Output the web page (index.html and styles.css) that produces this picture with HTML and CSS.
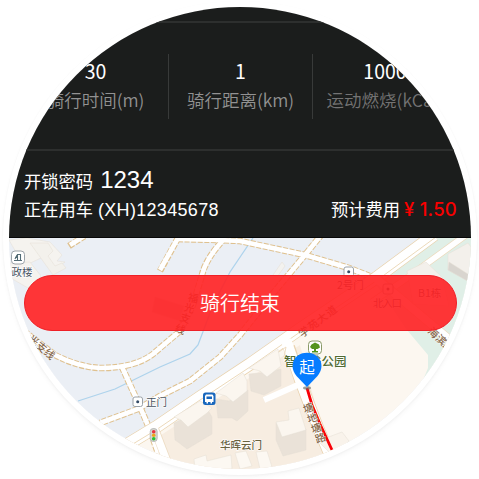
FILE: index.html
```html
<!DOCTYPE html>
<html lang="zh-CN">
<head>
<meta charset="utf-8">
<title>骑行</title>
<link rel="stylesheet" href="styles.css">
</head>
<body>
<main class="lens">
  <section class="panel">
    <div class="stats">
      <div class="stat"><span class="value">30</span><span class="label">骑行时间(m)</span></div>
      <div class="stat"><span class="value">1</span><span class="label">骑行距离(km)</span></div>
      <div class="stat"><span class="value">1000</span><span class="label dim">运动燃烧(kCal)</span></div>
    </div>
    <div class="ride">
      <div class="row code-row"><span>开锁密码</span><span class="code">1234</span></div>
      <div class="row bike-row"><span>正在用车 <span class="number">(XH)12345678</span></span><span class="fee">预计费用<b>¥ 1.50</b></span></div>
    </div>
  </section>
  <section class="map">
    <svg class="canvas" viewBox="9 238 462 231" width="462" height="231">
      <rect x="9" y="238" width="462" height="231" fill="#ebeff5"/>
      <!-- ground -->
      <path d="M120 450L160 426 215 388 255 360 300 329 372 282 440 238H471V469H120Z" fill="#fcf7f0"/>
      <path d="M158 437L300 345 322 430 335 469H176Z" fill="#f7ede1"/>
      <path d="M376 284L436 238H471V340L421 385 428 368V355L407 330Z" fill="#e0efe7"/>
      <!-- river -->
      <path d="M253 238L230 272 213 305 198 345 190 354 160 367 115 389 78 401" fill="none" stroke="#aed3ec" stroke-width="1.3"/>
      <!-- lanes -->
      <g fill="none" stroke="#dfc18f" stroke-width="6.6" stroke-dasharray="5 1.6">
        <path d="M69 246L86 235"/>
        <path d="M178 238L160 271"/>
        <path d="M178 239L218 240 240 241 305 255 349 268 372 277"/>
        <path d="M225 238Q206 258 202 275L193 305 180 331 153 354Q135 368 100 368Q78 367 55 355L25 332"/>
        <path d="M322 234L305 255 275 291 240 335 220 357 190 381 160 396 138 409 100 423"/>
        <path d="M122 367L137 400 150 430 158 453"/>
      </g>
      <g fill="none" stroke="#fff" stroke-width="4.6">
        <path d="M70 245L86 235"/>
        <path d="M178 238L160 270"/>
        <path d="M178 239L218 240 240 241 305 255 349 268 372 277"/>
        <path d="M225 238Q206 258 202 275L193 305 180 331 153 354Q135 368 100 368Q78 367 55 355L25 332"/>
        <path d="M322 234L305 255 275 291 240 335 220 357 190 381 160 396 138 409 100 423"/>
        <path d="M122 367L137 400 150 430 158 453"/>
      </g>
      <!-- avenue -->
      <g fill="none">
        <path d="M118 450L156 427 200 397 250 364 300 329 376 278 434 235" stroke="#e9d2ad" stroke-width="13"/>
        <path d="M118 450L156 427 200 397 250 364 300 329 376 278 434 235" stroke="#fff" stroke-width="11.6"/>
        <path d="M118 453L156 430 200 400 250 367 300 332 376 281 436 237" stroke="#ecd9ba" stroke-width="1"/>
        <path d="M372 302L400 283 466 235" stroke="#edd9bb" stroke-width="7"/>
        <path d="M372 302L400 283 466 235" stroke="#fff" stroke-width="5.6"/>
        <path d="M378 279L400 298 450 340" stroke="#eddcc3" stroke-width="9"/>
        <path d="M374 277L400 298 450 340" stroke="#fff" stroke-width="7.6"/>
        <path d="M289 347L300 380 317 425 337 472" stroke="#ead3b0" stroke-width="12"/>
        <path d="M286 340L300 380 317 425 337 472" stroke="#fff" stroke-width="10.4"/>
        <path d="M264 400L300 384" stroke="#fff" stroke-width="6"/>
        <path d="M266 361L286 347 284 357" stroke="#eddcc3" stroke-width="1"/>
        <path d="M155 430L171 472" stroke="#eddcc3" stroke-width="9"/>
        <path d="M154 428L171 472" stroke="#fff" stroke-width="7.6"/>
      </g>
      <!-- buildings -->
      <g stroke="#e5ded4" stroke-width=".5">
        <path d="M9 240L27 238 50 242 62 255 57 261 65 262 55 269 41 258 24 266Z" fill="#f5f3ef"/>
        <path d="M30 243L48 243 53 251 48 256 55 266 62 263 66 268 53 275Z" fill="#f3f1ec"/>
        <path d="M10 263L30 262 41 276 28 288 9 277Z" fill="#f5f3ef"/>
        <path d="M273 275L282 262 285 266 277 277Z" fill="#f3f2ef"/>
        <path d="M155 297L184 306 180 321 152 312Z" fill="#d9d5d0"/>
        <path d="M174 423L206 407 212 417V434L187 449 178 442 175 440Z" fill="#eae2d8"/>
        <path d="M174 417L200 401 212 408 207 413 188 427 181 420Z" fill="#fbf6ef"/>
        <path d="M216 399L229 401 248 390V411L237 421 232 418 218 418Z" fill="#eae2d8"/>
        <path d="M216 393L243 373 247 381V391L233 402 226 396Z" fill="#fbf6ef"/>
        <path d="M249 374L270 372 281 369V386L264 395 251 391Z" fill="#eae2d8"/>
        <path d="M249 368L278 349 281 366 267 377 260 371Z" fill="#fbf6ef"/>
        <path d="M276 423L306 429V450L283 456 276 440Z" fill="#eae2d8"/>
        <path d="M276 422L289 420 288 411 299 408 306 430 282 437Z" fill="#fbf6ef"/>
        <path d="M194 459L206 455 207 461 231 455 232 469H195ZM235 453L246 451 252 466 240 469ZM256 452L267 451 272 467 260 469Z" fill="#fcf8f2"/>
        <path d="M448 254L468 243 471 247V282L448 270Z" fill="#f3f0eb"/>
        <path d="M449 262L471 276V283L448 270Z" fill="#d9d5cf"/>
        <path d="M407 271L426 262 442 277 449 306 413 304Z" fill="#f3f0eb"/>
        <path d="M318 441L342 432 349 441 341 449 330 453Z" fill="#f9f3eb"/>
      </g>
      <!-- ride track -->
      <path d="M307 388L312 405 320 424 332 450" fill="none" stroke="#f80008" stroke-width="2.8"/>
      <!-- street names -->
      <g class="street">
        <text transform="translate(27 340) rotate(40)">光支线</text>
        <text x="188" y="302" transform="rotate(12 193 298)">福</text>
        <text x="184" y="312" transform="rotate(15 189 308)">光</text>
        <text x="180" y="322" transform="rotate(18 185 318)">支</text>
        <text x="175" y="333" transform="rotate(20 180 329)">线</text>
        <text transform="translate(302 338) rotate(-37)" letter-spacing="1">学苑大道</text>
        <text transform="translate(427 332) rotate(43)">海滨路</text>
        <text x="303" y="412" transform="rotate(-18 308 408)">塘</text>
        <text x="307" y="422" transform="rotate(-18 312 418)">地</text>
        <text x="311" y="432" transform="rotate(-18 316 428)">塘</text>
        <text x="315" y="442" transform="rotate(-18 320 438)">路</text>
      </g>
      <!-- places -->
      <g class="place">
        <text x="1" y="276">行政楼</text><text x="146" y="406">正门</text><text x="337" y="289">2号门</text>
        <text x="373" y="307" textLength="29">北入口</text><text x="418" y="297">B1栋</text>
        <text x="220" y="449" class="olive">华晖云门</text><text x="284" y="366" class="green">智慧谷公园</text>
      </g>
      <g fill="#fff" stroke="#9ba2a8" stroke-width="1">
        <rect x="11.5" y="251" width="13" height="13" rx="3.5"/>
        <rect x="133" y="397" width="9.5" height="9.5" rx="2"/>
        <rect x="344" y="267" width="9.5" height="9.5" rx="2"/>
        <rect x="383" y="284" width="10" height="10" rx="2"/>
        <rect x="308.5" y="341" width="13" height="13" rx="3.5" stroke="#8a9a68"/>
      </g>
      <g fill="#334b66"><circle cx="137.7" cy="401.7" r="1.5"/><circle cx="348.7" cy="271.7" r="1.5"/><circle cx="388" cy="289" r="1.5"/></g>
      <path d="M14 260.5H22M15 259L17 255M17.5 260V254.5H20.5V260M15 257.5H17.5" fill="none" stroke="#526b75" stroke-width="1.1"/>
      <path d="M315 342.5L319 344.5 320 347.5 317.5 349H316V351H318V352.5H312V351H314V349H312L310 347 311.5 344.5Z" fill="#54941e"/>
      <rect x="203" y="392.5" width="12.5" height="12.5" rx="2.5" fill="#1867bd"/>
      <path d="M206 394.5H212.5L213.5 396V402H212V403.5H210.5V402H208V403.5H206.5V402H205V396Z" fill="#fff"/>
      <path d="M206.5 396.5H212V399H206.5Z" fill="#1867bd"/>
      <rect x="150.2" y="428.5" width="7" height="13" rx="3" fill="#d5d6d0" stroke="#aaa" stroke-width=".7"/>
      <circle cx="153.7" cy="431.7" r="1.8" fill="#e93443"/><circle cx="153.7" cy="435.2" r="1.8" fill="#eda51f"/><circle cx="153.7" cy="438.7" r="1.8" fill="#2cc235"/>
      <!-- start pin -->
      <ellipse cx="307" cy="388" rx="4" ry="1.7" fill="#69716c" opacity=".65"/>
      <path d="M307 387L296.5 376C288 366 294 352.8 307 352.8S326 366 317.5 376Z" fill="#077cff"/>
      <text x="307" y="372.5" class="pin">起</text>
    </svg>
    <button class="finish" type="button">骑行结束</button>
  </section>
</main>
</body>
</html>
```
FILE: styles.css
```css
* { box-sizing: border-box; }
body {
  margin: 0;
  height: 479px;
  padding: 7px 0 0 9px;
  overflow: hidden;
  background: #fff;
  font-family: "Liberation Sans", "Noto Sans CJK SC", sans-serif;
}
.lens {
  width: 462px;
  height: 462px;
  border-radius: 50%;
  overflow: hidden;
  box-shadow: 0 0 0 6px #fff, 0 1px 2px 6px #f1f1f1, 0 3px 5px 6px #f8f8f8;
}
.panel {
  height: 231px;
  padding-top: 14px;
  background: #1b1d1c;
  border-bottom: 1px solid #080808;
  color: #fff;
}
.stats {
  display: grid;
  grid-template-columns: repeat(3, 144.5px);
  align-items: center;
  justify-content: center;
  height: 130px;
  border-top: 2px solid #2d2f2e;
  border-bottom: 2px solid #2d2f2e;
}
.stat {
  display: flex;
  flex-direction: column;
  align-items: center;
  height: 65px;
  padding-top: 3px;
  white-space: nowrap;
}
.stat + .stat { border-left: 1px solid #383a39; }
.value { font-family: "Noto Sans CJK SC", sans-serif; font-size: 19.5px; font-weight: 400; line-height: 28px; }
.label { font-family: "Noto Sans CJK SC", sans-serif; font-size: 17.5px; font-weight: 350; line-height: 29px; color: #929292; }
.dim { color: #737373; }
.ride { padding: 14px 14px 0 15px; font-size: 17.3px; }
.row { display: flex; white-space: nowrap; }
.code-row { align-items: baseline; gap: 7px; height: 31px; line-height: 30px; }
.code { font-size: 24px; }
.bike-row { justify-content: space-between; line-height: 28px; }
.number { font-size: 18px; letter-spacing: .32px; }
.fee b { margin-left: 4px; color: #f80000; font: 500 18.5px "Inter", sans-serif; letter-spacing: .2px; }
.map { display: grid; height: 231px; }
.canvas { grid-area: 1 / 1; display: block; }
.finish {
  grid-area: 1 / 1;
  z-index: 1;
  justify-self: center;
  width: 433px;
  height: 56px;
  margin-top: 37px;
  padding: 0 0 2px;
  border: 1px solid #ee2027;
  border-radius: 28px;
  background: rgba(255, 34, 36, .91);
  box-shadow: 0 0 1px #fff;
  color: #fff;
  font: 350 20px "Noto Sans CJK SC", sans-serif;
}
.street { font: 500 10.5px "Noto Sans CJK SC", sans-serif; fill: #86684b; paint-order: stroke; stroke: #fff; stroke-width: .8px; }
.place { font: 10.5px "Noto Sans CJK SC", sans-serif; fill: #46525e; paint-order: stroke; stroke: #fff; stroke-width: 1.2px; }
.olive { fill: #69623f; font-weight: 500; }
.green { fill: #526b32; font-size: 12.5px; font-weight: 500; }
.pin { fill: #fff; font: 15.5px "Noto Sans CJK SC", sans-serif; text-anchor: middle; }
```
